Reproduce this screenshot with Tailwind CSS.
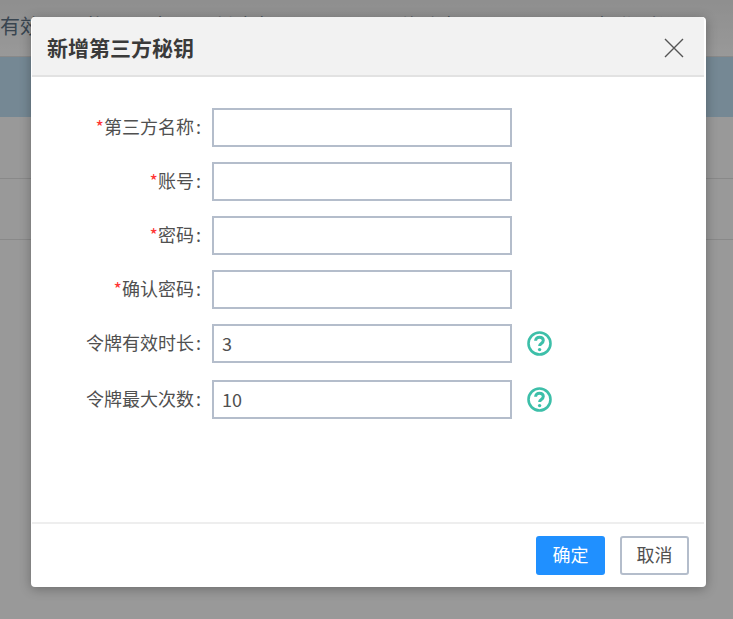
<!DOCTYPE html>
<html lang="en">
<head>
  <meta charset="UTF-8" />
  <title>新增第三方秘钥</title>
  <script src="https://cdn.jsdelivr.net/npm/@tailwindcss/browser@4"></script>
</head>
<body class="relative h-[619px] w-[733px] overflow-hidden bg-white font-['Noto_Sans_CJK_SC','Liberation_Sans',sans-serif]">
  <!-- page behind the dialog -->
  <div class="h-full">
    <div class="flex h-[57px] items-center whitespace-nowrap border-b border-[#e5e5e5] bg-linear-to-b from-[#eeeeee] to-white pb-[4px] text-[20px] text-[#5f7386]">
      <span>有效期</span><span class="ml-[25px]">状</span><span class="ml-[45px]">态</span><span class="ml-[43px]">创建者</span><span class="ml-[127px]">修改者</span><span class="ml-[138px]">操作时间</span>
    </div>
    <div class="h-[60px] bg-[#c3e3f7]"></div>
    <div class="h-[62px] border-b border-[#e5e5e5]"></div>
    <div class="h-[61px] border-b border-[#e5e5e5]"></div>
  </div>
  <div class="absolute inset-0 bg-black/40"></div>

  <div class="absolute left-[31px] top-[17px] flex h-[570px] w-[675px] flex-col overflow-hidden rounded-[4px] bg-white pl-px pr-[2px] shadow-[0_2px_12px_rgba(0,0,0,0.3)]">
    <div class="flex h-[60px] items-center justify-between border-b-2 border-[#e2e2e2] bg-[#f2f2f2] pl-[15px] pr-[20px] pt-[4px]">
      <h2 class="text-[21px] font-bold text-[#3a3a3a]">新增第三方秘钥</h2>
      <svg class="h-[20px] w-[20px]" viewBox="0 0 20 20" fill="none" stroke="#555" stroke-width="1.4"><path d="M1 1l18 18M19 1L1 19" /></svg>
    </div>

    <form class="flex flex-1 flex-col pt-[31px] text-[18px] text-[#505050]">
      <div class="flex h-[39px] items-center">
        <label class="w-[171px] pb-[2px] pr-[2px] text-right"><span class="text-[#f33]">*</span>第三方名称<span class="ml-[2px]">:</span></label>
        <input class="ml-[9px] h-[39px] w-[300px] border-2 border-[#b4bdcb] px-[8px] pb-[2px] outline-none" />
      </div>
      <div class="mt-[15px] flex h-[39px] items-center">
        <label class="w-[171px] pb-[2px] pr-[2px] text-right"><span class="text-[#f33]">*</span>账号<span class="ml-[2px]">:</span></label>
        <input class="ml-[9px] h-[39px] w-[300px] border-2 border-[#b4bdcb] px-[8px] pb-[2px] outline-none" />
      </div>
      <div class="mt-[15px] flex h-[39px] items-center">
        <label class="w-[171px] pb-[2px] pr-[2px] text-right"><span class="text-[#f33]">*</span>密码<span class="ml-[2px]">:</span></label>
        <input class="ml-[9px] h-[39px] w-[300px] border-2 border-[#b4bdcb] px-[8px] pb-[2px] outline-none" />
      </div>
      <div class="mt-[15px] flex h-[39px] items-center">
        <label class="w-[171px] pb-[2px] pr-[2px] text-right"><span class="text-[#f33]">*</span>确认密码<span class="ml-[2px]">:</span></label>
        <input class="ml-[9px] h-[39px] w-[300px] border-2 border-[#b4bdcb] px-[8px] pb-[2px] outline-none" />
      </div>
      <div class="mt-[15px] flex h-[39px] items-center">
        <label class="w-[171px] pb-[2px] pr-[2px] text-right">令牌有效时长<span class="ml-[2px]">:</span></label>
        <input value="3" class="ml-[9px] h-[39px] w-[300px] border-2 border-[#b4bdcb] px-[8px] pb-[2px] outline-none" />
        <svg class="ml-[15px] h-[25px] w-[25px]" viewBox="0 0 25 25" fill="none"><circle cx="12.5" cy="12.5" r="11" stroke="#3dbfa9" stroke-width="2.6" /><path d="M8.6 9.8c0-2.2 1.7-3.6 3.9-3.6s3.8 1.3 3.8 3.3c0 2.9-3.7 2.9-3.7 5.4" stroke="#3dbfa9" stroke-width="3" /><circle cx="12.6" cy="18.6" r="1.7" fill="#3dbfa9" /></svg>
      </div>
      <div class="mt-[17px] flex h-[39px] items-center">
        <label class="w-[171px] pb-[2px] pr-[2px] text-right">令牌最大次数<span class="ml-[2px]">:</span></label>
        <input value="10" class="ml-[9px] h-[39px] w-[300px] border-2 border-[#b4bdcb] px-[8px] pb-[2px] outline-none" />
        <svg class="ml-[15px] h-[25px] w-[25px]" viewBox="0 0 25 25" fill="none"><circle cx="12.5" cy="12.5" r="11" stroke="#3dbfa9" stroke-width="2.6" /><path d="M8.6 9.8c0-2.2 1.7-3.6 3.9-3.6s3.8 1.3 3.8 3.3c0 2.9-3.7 2.9-3.7 5.4" stroke="#3dbfa9" stroke-width="3" /><circle cx="12.6" cy="18.6" r="1.7" fill="#3dbfa9" /></svg>
      </div>
    </form>

    <div class="flex h-[65px] items-start justify-end gap-[15px] border-t-2 border-[#eeeeee] pr-[15px] pt-[12px] text-[18px]">
      <button class="h-[39px] w-[69px] rounded-[3px] bg-[#2090ff] pb-[2px] text-white">确定</button>
      <button class="h-[39px] w-[69px] rounded-[3px] border-2 border-[#b4bdcb] bg-white pb-[2px] text-[#505050]">取消</button>
    </div>
  </div>
</body>
</html>
